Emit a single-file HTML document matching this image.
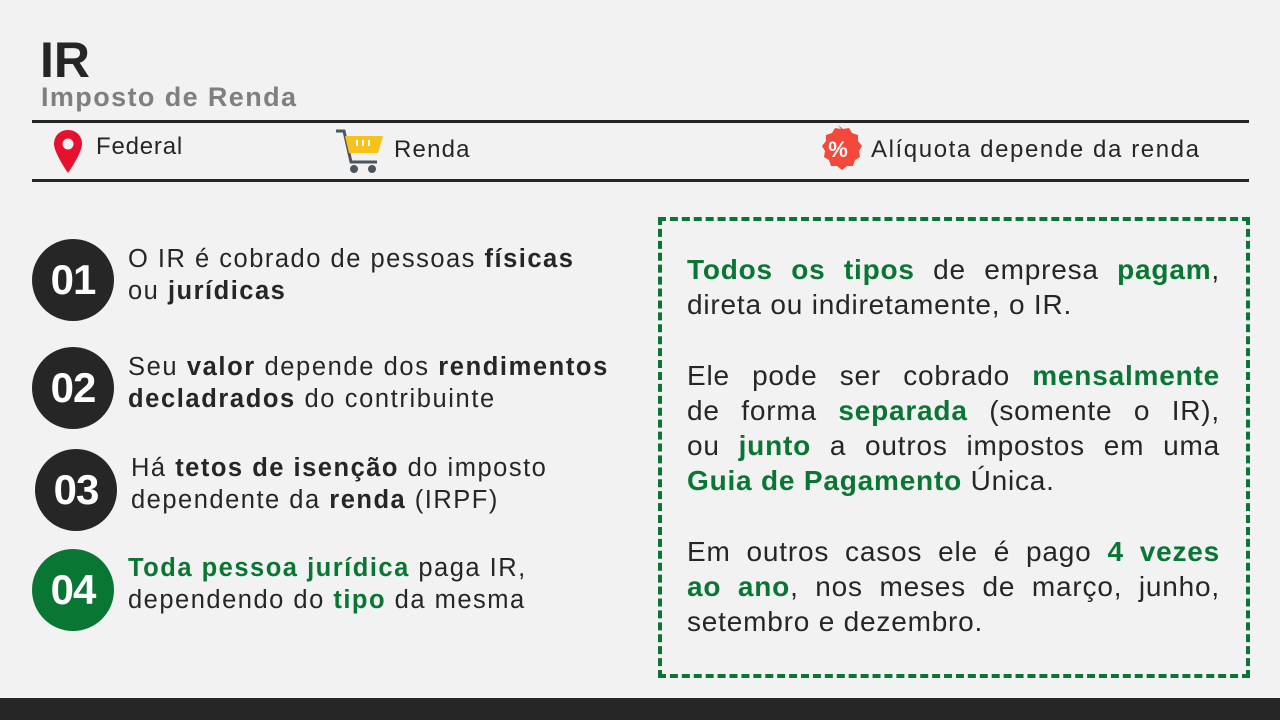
<!DOCTYPE html>
<html><head><meta charset="utf-8"><style>
*{margin:0;padding:0;box-sizing:border-box}
body{width:1280px;height:720px;background:#f2f2f2;position:relative;overflow:hidden;font-family:"Liberation Sans",sans-serif;color:#262626}
.a{position:absolute;white-space:nowrap}
.line{position:absolute;left:32px;width:1217px;height:3px;background:#262626}
.c{position:absolute;width:82px;height:82px;border-radius:50%;background:#262626;color:#fff;font-weight:bold;font-size:42px;text-align:center;line-height:82px;letter-spacing:-1px}
.t{position:absolute;font-size:25.5px;line-height:32px;white-space:nowrap;letter-spacing:1.5px}
b{font-weight:bold}
.g{color:#0a7634;font-weight:bold}
.box{position:absolute;left:658px;top:217px;width:592px;height:461px;border:4px dashed #0a7634}
.p{position:absolute;left:687px;width:533px;font-size:28px;line-height:35px;letter-spacing:0.8px}
.p div{text-align:justify;text-align-last:justify;white-space:nowrap}
.p div.l{text-align-last:left}
</style></head><body>
<div class="a" style="left:40px;top:32px;font-size:50px;font-weight:bold;line-height:56px">IR</div>
<div class="a" style="left:41px;top:80px;font-size:27px;font-weight:bold;color:#7f7f7f;line-height:34px;letter-spacing:1.4px">Imposto de Renda</div>
<div class="line" style="top:120px"></div>
<div class="line" style="top:179px"></div>
<svg class="a" style="left:52px;top:129px" width="32" height="45" viewBox="0 0 32 45"><path d="M16 1C7.7 1 2 7 2 15c0 9 14 29 14 29s14-20 14-29C30 7 24.3 1 16 1z" fill="#e8102f"/><circle cx="16" cy="15" r="5.5" fill="#f2f2f2"/></svg>
<div class="a" style="left:96px;top:133px;font-size:24px;letter-spacing:0.8px">Federal</div>
<svg class="a" style="left:335px;top:128px" width="50" height="46" viewBox="0 0 50 46"><path d="M1 3h8l7 31h26" fill="none" stroke="#4a5560" stroke-width="3"/><path d="M10 8h38l-5 17H14z" fill="#f7c21c"/><path d="M22 12v6M28 12v6M34 12v6" stroke="#fff" stroke-width="2"/><circle cx="19" cy="41" r="4" fill="#4a5560"/><circle cx="37" cy="41" r="4" fill="#4a5560"/></svg>
<div class="a" style="left:394px;top:136px;font-size:24px;letter-spacing:1.2px">Renda</div>
<svg class="a" style="left:813px;top:124px" width="50" height="50" viewBox="0 0 50 50"><path d="M25 1l5 4 6-1 3 5 6 2 0 6 4 5-3 5 1 6-5 3-2 6-6 0-5 4-5-4-6 0-2-6-5-3 1-6-3-5 4-5 0-6 6-2 3-5 6 1z" fill="#f4483a"/><text x="25" y="33" fill="#fff" font-size="22" font-weight="bold" text-anchor="middle" font-family="Liberation Sans">%</text></svg>
<div class="a" style="left:871px;top:136px;font-size:24px;letter-spacing:1.6px">Alíquota depende da renda</div>

<div class="c" style="left:32px;top:239px">01</div>
<div class="t" style="left:128px;top:243px">O IR é cobrado de pessoas <b>físicas</b><br>ou <b>jurídicas</b></div>
<div class="c" style="left:32px;top:347px">02</div>
<div class="t" style="left:128px;top:351px;letter-spacing:1.6px">Seu <b>valor</b> depende dos <b>rendimentos</b><br><b>decladrados</b> do contribuinte</div>
<div class="c" style="left:35px;top:449px">03</div>
<div class="t" style="left:131px;top:452px">Há <b>tetos de isenção</b> do imposto<br>dependente da <b>renda</b> (IRPF)</div>
<div class="c" style="left:32px;top:549px;background:#0a7634">04</div>
<div class="t" style="left:128px;top:552px"><span class="g">Toda pessoa jurídica</span> paga IR,<br>dependendo do <span class="g">tipo</span> da mesma</div>

<div class="box"></div>
<div class="p" style="top:252px"><div><span class="g">Todos os tipos</span> de empresa <span class="g">pagam</span>,</div><div class="l">direta ou indiretamente, o IR.</div></div>
<div class="p" style="top:358px"><div>Ele pode ser cobrado <span class="g">mensalmente</span></div><div>de forma <span class="g">separada</span> (somente o IR),</div><div>ou <span class="g">junto</span> a outros impostos em uma</div><div class="l"><span class="g">Guia de Pagamento</span> Única.</div></div>
<div class="p" style="top:534px"><div>Em outros casos ele é pago <span class="g">4 vezes</span></div><div><span class="g">ao ano</span>, nos meses de março, junho,</div><div class="l">setembro e dezembro.</div></div>
<div class="a" style="left:0;top:698px;width:1280px;height:22px;background:#262626"></div>
</body></html>
